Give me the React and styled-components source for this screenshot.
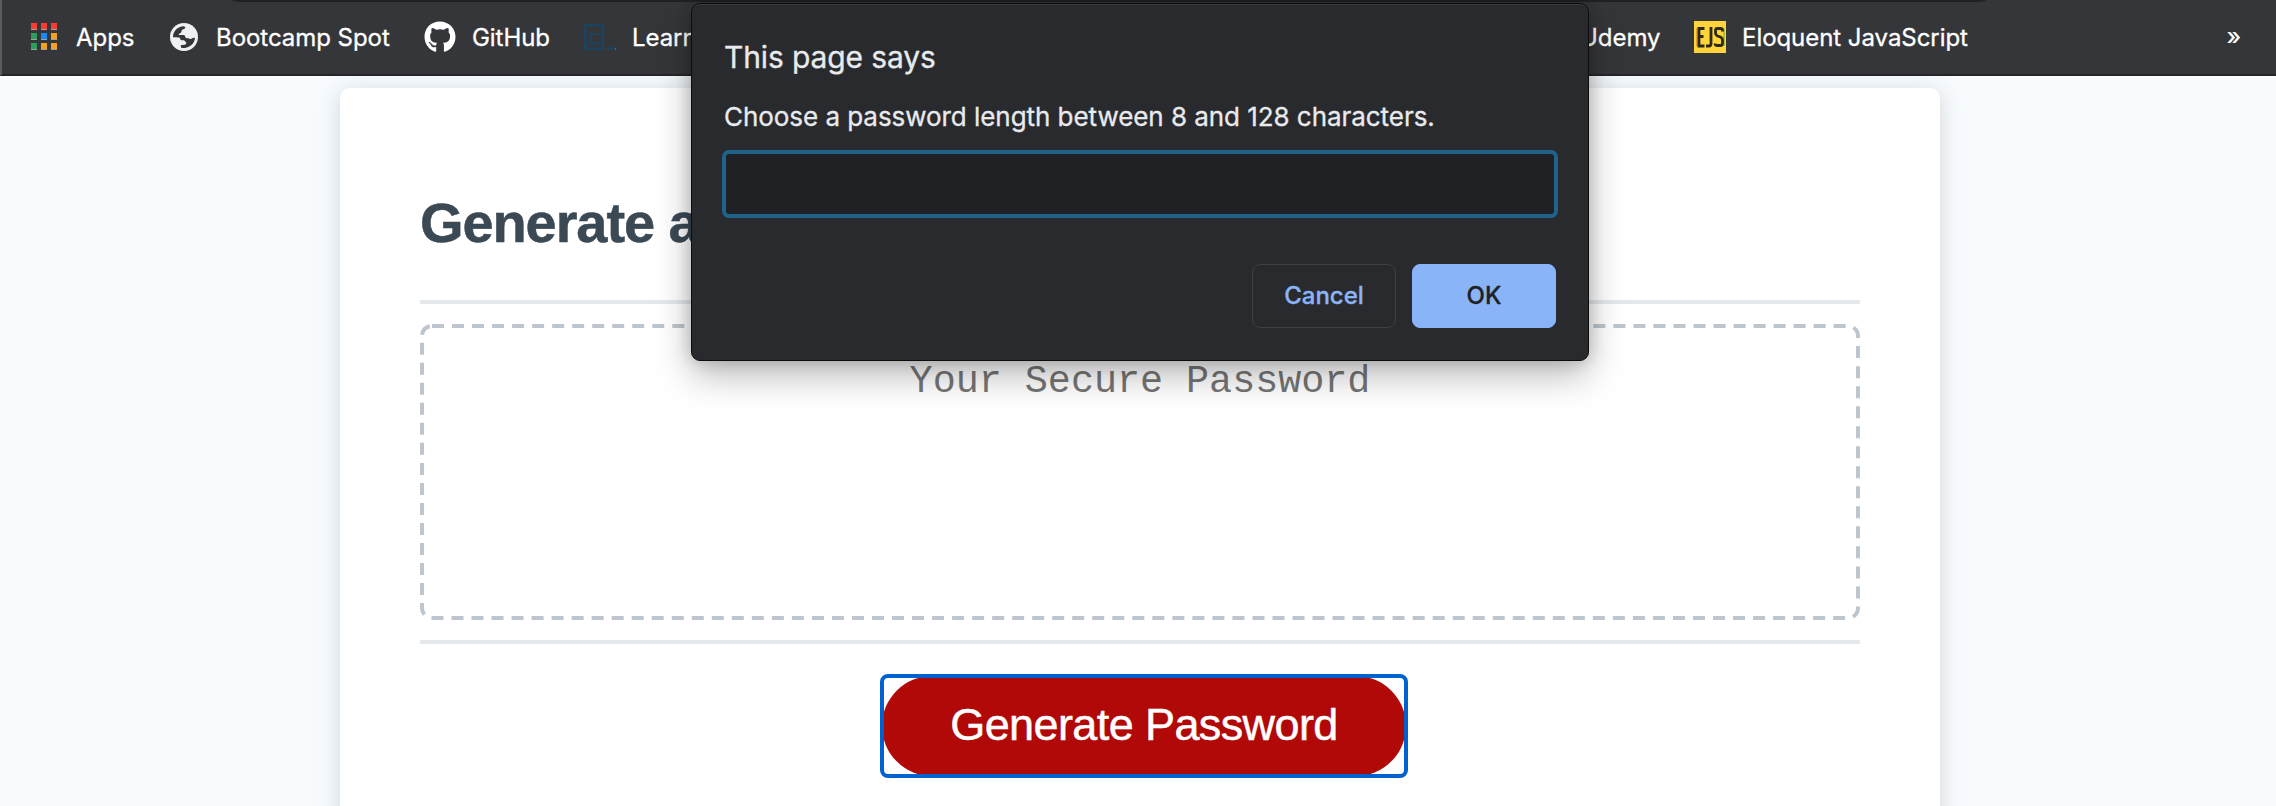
import React from "react";
import styled, { createGlobalStyle } from "styled-components";
import { FaGithub } from "react-icons/fa";

const Global = createGlobalStyle`
  * { box-sizing: border-box; }
  body { margin: 0; background: #f7fbff; overflow: hidden; font-family: "Liberation Sans", Arial, sans-serif; }
`;

const Screen = styled.div`
  position: relative;
  width: 2276px;
  height: 806px;
  overflow: hidden;
  background: #f7fbfe;
`;

const BookmarkBar = styled.nav`
  position: relative;
  z-index: 1;
  display: flex;
  align-items: center;
  height: 76px;
  padding: 0 35px 0 29px;
  background: #35363a;
  border-left: 2px solid #5c5d60;
  border-bottom: 2px solid #27252a;
  font-family: Inter, sans-serif;
`;

const Toolbar = styled.div`
  position: absolute;
  z-index: 2;
  top: 0;
  left: 232px;
  width: 1754px;
  height: 2px;
  background: #202124;
  border-radius: 0 0 12px 12px / 0 0 2px 2px;
`;

const Bookmark = styled.a`
  display: flex;
  align-items: center;
  flex: none;
  width: ${(p) => p.$width}px;
  color: #fff;
  font-size: 24px;
  line-height: 32px;
  letter-spacing: -0.05px;
  white-space: nowrap;
  -webkit-text-stroke: 0.3px;

  svg { flex: none; margin-right: ${(p) => p.$gap}px; }
`;

const Label = styled.span`
  padding-top: 2px;
`;

const Overflow = styled.span`
  margin-left: auto;
  padding-bottom: 1px;
  color: #fff;
  font-size: 24px;
  font-weight: 500;
`;

const Card = styled.main`
  width: 1600px;
  height: 900px;
  margin: 12px auto 0 340px;
  padding: 80px;
  background: #fff;
  border-radius: 10px;
  box-shadow: 0 4px 22px rgba(60, 70, 80, 0.2);
`;

const Title = styled.h1`
  margin: 0;
  height: 132px;
  padding-top: 23px;
  color: #3b4955;
  font-size: 56px;
  line-height: 64px;
  letter-spacing: -1.1px;
  -webkit-text-stroke: 0.5px;
`;

const Body = styled.section`
  display: flex;
  height: 344px;
  padding: 20px 0;
  border-top: 4px solid #e4e8eb;
  border-bottom: 4px solid #e4e8eb;
`;

const PasswordBox = styled.div`
  position: relative;
  flex: 1;
  padding-top: 36px;
  border-radius: 12px;
  color: #757575;
  font-family: "Liberation Mono", "Courier New", monospace;
  font-size: 38.4px;
  line-height: 44px;
  text-align: center;
`;

const DashedOutline = styled.svg`
  position: absolute;
  top: 0;
  left: 0;
`;

const Footer = styled.footer`
  display: flex;
  padding: 32px 0 0 462px;
`;

const GenerateButton = styled.button`
  width: 524px;
  height: 100px;
  padding: 0 0 3px;
  border: 0;
  border-radius: 50px;
  background: #b00907;
  color: #fff;
  font-family: "Liberation Sans", Arial, sans-serif;
  font-size: 45px;
  letter-spacing: -0.6px;
  text-align: center;
  -webkit-text-stroke: 0.5px;
`;

const FocusRing = styled.div`
  display: flex;
  position: relative;

  &::after {
    content: "";
    position: absolute;
    inset: -2px;
    border: 4px solid #0062cf;
    border-radius: 8px;
  }
`;

const Dialog = styled.div`
  position: absolute;
  z-index: 3;
  top: 3px;
  left: 691px;
  width: 898px;
  height: 358px;
  padding: 31px 32px 0;
  background: #292a2d;
  border: 1px solid #0c0c0d;
  border-radius: 9px;
  box-shadow: inset 0 1px 0 #3a3b3e, 0 14px 36px rgba(0, 0, 0, 0.28), 0 0 16px rgba(0, 0, 0, 0.18);
  color: #e8eaed;
  font-family: Inter, sans-serif;
  -webkit-text-stroke: 0.3px;
`;

const DialogTitle = styled.div`
  font-size: 30px;
  line-height: 44px;
  letter-spacing: -0.12px;
`;

const Message = styled.label`
  display: block;
  margin-top: 20px;
  font-size: 26px;
  line-height: 36px;
  letter-spacing: -0.05px;
  white-space: nowrap;
`;

const PromptInput = styled.input`
  display: block;
  width: 836px;
  height: 68px;
  margin: 15px 0 0 -2px;
  background: #202124;
  border: 4px solid #1f638a;
  border-radius: 7px;
  outline: none;
`;

const Actions = styled.div`
  display: flex;
  justify-content: flex-end;
  gap: 16px;
  margin-top: 46px;
`;

const Action = styled.button`
  width: 144px;
  height: 64px;
  padding: 0 0 2px;
  border: 1px solid ${(p) => (p.$primary ? "#8ab4f8" : "#3c4043")};
  border-radius: 8px;
  background: ${(p) => (p.$primary ? "#8ab4f8" : "transparent")};
  color: ${(p) => (p.$primary ? "#202124" : "#8ab4f8")};
  font: 500 24px Inter, sans-serif;
  -webkit-text-stroke: 0.3px;
`;

const appColors = ["#fb3b31", "#fb3b31", "#fb3b31", "#2a9f5b", "#168bf5", "#f4a11f", "#2a9f5b", "#f4a11f", "#f4a11f"];

const AppsIcon = () => (
  <svg width="26" height="28" viewBox="0 0 26 28">
    {appColors.map((c, i) => (
      <g key={i} transform={`translate(${(i % 3) * 10} ${Math.floor(i / 3) * 10})`}>
        <rect width="6" height="7" fill="#a3a09c" />
        <rect width="6" height="6" fill={c} />
      </g>
    ))}
  </svg>
);

const GlobeIcon = () => (
  <svg width="28" height="28" viewBox="18 17 84 84">
    <circle cx="60" cy="59" r="42" fill="#eef1f2" />
    <g fill="#35363a">
      <path d="M27 60C27 42 40 27 60 27L64 30Q64 35 54 37L52 44Q51 48 45 49L44 53H61L66 62L74 66L68 69H52Q48 68 48 61Q44 59 27 60Z" />
      <path d="M93 61C92 78 78 93 52 92L50 84Q52 82 62 82Q68 80 67 76L60 68L72 62Q80 68 86 62Z" />
    </g>
  </svg>
);

const CodecademyIcon = () => (
  <svg width="32" height="28" viewBox="0 0 32 28" fill="none" stroke="#1b435d">
    <path d="M1.300 2.300h17.400v23.400H1.300z" strokeWidth="2.600" />
    <path d="M14 13V11H7v9.500h7V18.500" strokeWidth="2.200" />
    <path d="M23 25.500h9" strokeWidth="2.600" />
    <path d="M31.500 25v2" stroke="#4d7389" strokeWidth="0.800" />
  </svg>
);

const EjsIcon = () => (
  <svg width="32" height="32" viewBox="0 0 32 32">
    <rect width="32" height="32" fill="#ffd53b" />
    <path d="M3 7v18" stroke="#e8912a" strokeWidth="1.500" />
    <path d="M30 8v17" stroke="#8fae32" strokeWidth="1.200" />
    <g fill="none" stroke="#2b2a16" strokeWidth="2.800">
      <path d="M10.500 7.500H5v17.500H10.500M5 15.500H9.500" />
      <path d="M17 6v16.500q0 2.500-2 2.500h-3" />
      <path d="M28.500 10.500V9q0-1.500-2-1.500h-3q-2 0-2 2v2.500q0 2 2 3l3 1q2 1 2 3v3q0 2.500-2 2.500h-3q-2.500 0-2.500-2" />
    </g>
  </svg>
);

export default function App() {
  return (
    <Screen>
      <Global />
      <Toolbar />
      <BookmarkBar>
        <Bookmark $width={139} $gap={19}><AppsIcon /><Label>Apps</Label></Bookmark>
        <Bookmark $width={254} $gap={18}><GlobeIcon /><Label>Bootcamp Spot</Label></Bookmark>
        <Bookmark $width={160} $gap={16}><FaGithub size={32} /><Label>GitHub</Label></Bookmark>
        <Bookmark $width={996} $gap={16}><CodecademyIcon /><Label>Learn</Label></Bookmark>
        <Bookmark $width={114} $gap={0}><Label>Udemy</Label></Bookmark>
        <Bookmark $width={300} $gap={16}><EjsIcon /><Label>Eloquent JavaScript</Label></Bookmark>
        <Overflow>»</Overflow>
      </BookmarkBar>
      <Card>
        <Title>Generate a Password</Title>
        <Body>
          <PasswordBox>
            <DashedOutline width="1440" height="296">
              <rect x="2" y="2" width="1436" height="292" rx="10" fill="none" stroke="#bdc6ce" strokeWidth="4" strokeDasharray="12 8.024" />
            </DashedOutline>
            Your Secure Password
          </PasswordBox>
        </Body>
        <Footer>
          <FocusRing><GenerateButton>Generate Password</GenerateButton></FocusRing>
        </Footer>
      </Card>
      <Dialog role="dialog">
        <DialogTitle>This page says</DialogTitle>
        <Message htmlFor="length">Choose a password length between 8 and 128 characters.</Message>
        <PromptInput id="length" />
        <Actions>
          <Action>Cancel</Action>
          <Action $primary>OK</Action>
        </Actions>
      </Dialog>
    </Screen>
  );
}
